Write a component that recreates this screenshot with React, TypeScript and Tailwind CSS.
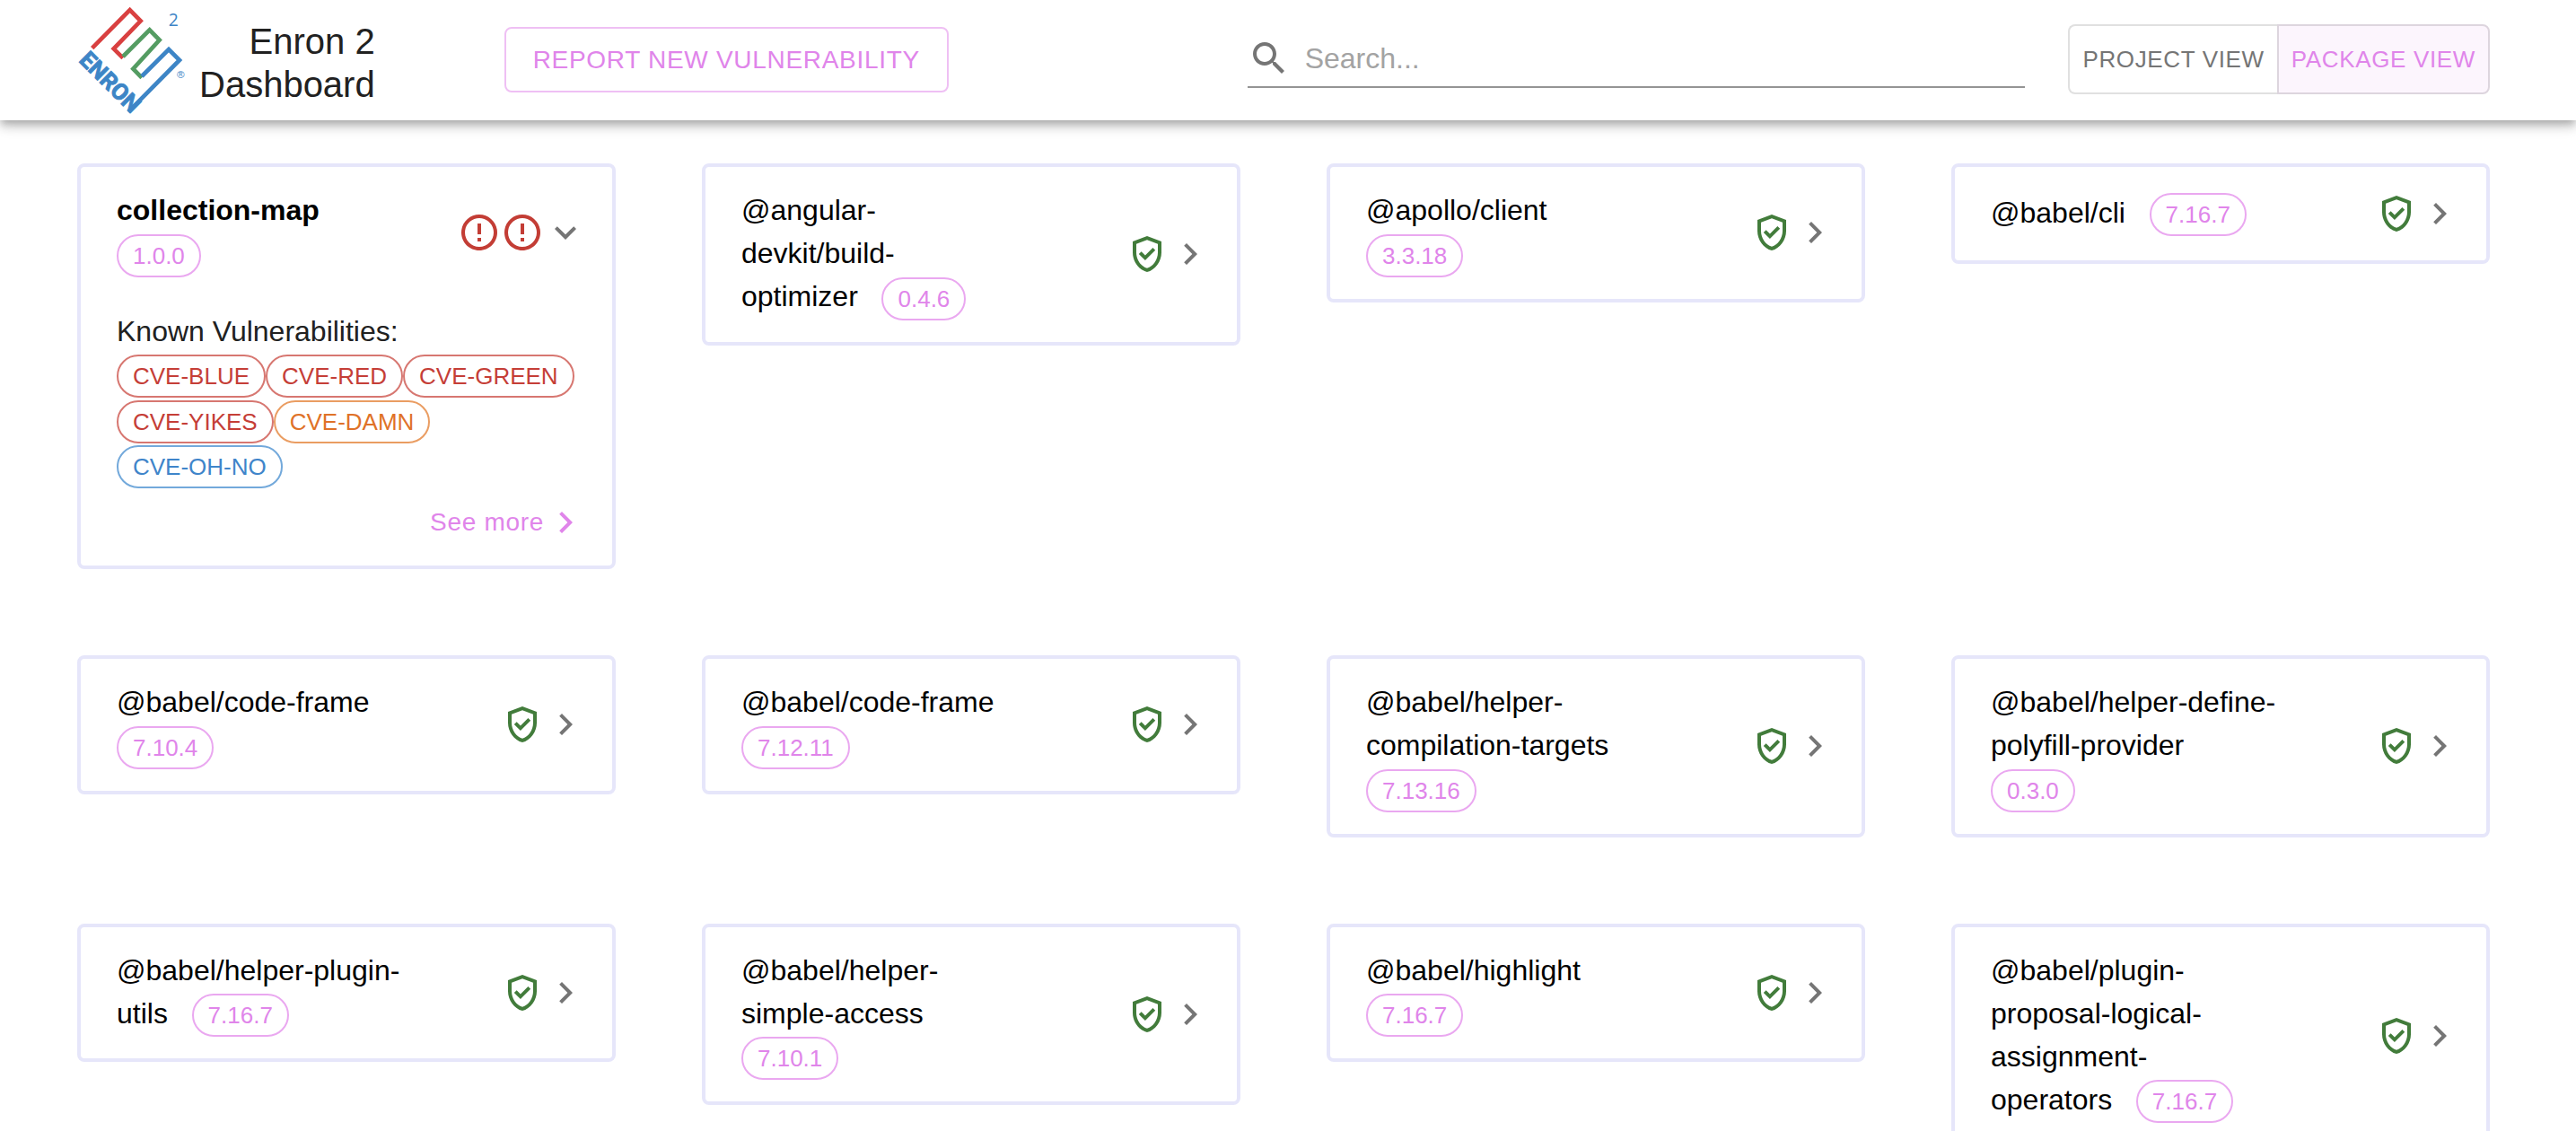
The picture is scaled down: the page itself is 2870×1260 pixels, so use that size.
import { useState } from "react";

type Severity = "high" | "medium" | "low";

interface Vulnerability {
  id: string;
  severity: Severity;
}

interface Package {
  name: string;
  version: string;
  vulnerabilities?: Vulnerability[];
}

const packages: Package[] = [
  {
    name: "collection-map",
    version: "1.0.0",
    vulnerabilities: [
      { id: "CVE-BLUE", severity: "high" },
      { id: "CVE-RED", severity: "high" },
      { id: "CVE-GREEN", severity: "high" },
      { id: "CVE-YIKES", severity: "high" },
      { id: "CVE-DAMN", severity: "medium" },
      { id: "CVE-OH-NO", severity: "low" },
    ],
  },
  { name: "@angular-devkit/build-optimizer", version: "0.4.6" },
  { name: "@apollo/client", version: "3.3.18" },
  { name: "@babel/cli", version: "7.16.7" },
  { name: "@babel/code-frame", version: "7.10.4" },
  { name: "@babel/code-frame", version: "7.12.11" },
  { name: "@babel/helper-compilation-targets", version: "7.13.16" },
  { name: "@babel/helper-define-polyfill-provider", version: "0.3.0" },
  { name: "@babel/helper-plugin-utils", version: "7.16.7" },
  { name: "@babel/helper-simple-access", version: "7.10.1" },
  { name: "@babel/highlight", version: "7.16.7" },
  { name: "@babel/plugin-proposal-logical-assignment-operators", version: "7.16.7" },
];

const chipColors: Record<Severity, string> = {
  high: "border-[#d77771] text-[#c53e37]",
  medium: "border-[#ea9d62] text-[#df7228]",
  low: "border-[#73a9db] text-[#3f85ca]",
};

function Icon({ d, className = "" }: { d: string; className?: string }) {
  return (
    <svg viewBox="0 0 24 24" fill="currentColor" aria-hidden="true" className={`size-12 shrink-0 ${className}`}>
      <path d={d} />
    </svg>
  );
}

const SEARCH =
  "M15.5 14h-.79l-.28-.27C15.41 12.59 16 11.11 16 9.5 16 5.91 13.09 3 9.5 3S3 5.91 3 9.5 5.91 16 9.5 16c1.61 0 3.09-.59 4.23-1.57l.27.28v.79l5 4.99L20.49 19l-4.99-5zm-6 0C7.01 14 5 11.99 5 9.5S7.01 5 9.5 5 14 7.01 14 9.5 11.99 14 9.5 14z";
const ERROR =
  "M11 15h2v2h-2zm0-8h2v6h-2zm.99-5C6.47 2 2 6.48 2 12s4.47 10 9.99 10C17.52 22 22 17.52 22 12S17.52 2 11.99 2zM12 20c-4.42 0-8-3.58-8-8s3.58-8 8-8 8 3.58 8 8-3.58 8-8 8z";
const SHIELD =
  "M12 2 4 5v6.09c0 5.05 3.41 9.76 8 10.91 4.59-1.15 8-5.86 8-10.91V5l-8-3zm6 9.09c0 4-2.55 7.7-6 8.83-3.45-1.13-6-4.82-6-8.83v-4.7l6-2.25 6 2.25v4.7zM8.82 10.59 7.4 12l3.54 3.54 5.66-5.66-1.41-1.41-4.24 4.24z";
const CHEVRON = "M10 6 8.59 7.41 13.17 12l-4.58 4.59L10 18l6-6z";

function Logo() {
  return (
    <svg
      viewBox="48 0 372 390"
      className="h-[130px] w-[124px] shrink-0 overflow-visible"
      role="img"
      aria-label="Enron 2"
    >
      <g fill="none" strokeWidth="14">
        <path d="M98 158 224 30 260 67 170 160 201 191" stroke="#d94040" />
        <path d="M201 186 290 97 323 131 235 227 264 257" stroke="#549c62" />
        <path d="M264 252 354 162 390 198 219 371" stroke="#3d85c6" />
      </g>
      <g fill="#3d85c6">
        <text
          transform="translate(51 201) rotate(45)"
          fontFamily="Roboto, 'Liberation Sans', sans-serif"
          fontWeight="700"
          fontSize="76"
          stroke="#3d85c6"
          strokeWidth="3"
        >
          ENRON
        </text>
        <text x="353" y="84" fontFamily="'Open Sans', sans-serif" fontSize="58">
          2
        </text>
        <text x="381" y="259" fontFamily="'Liberation Sans', sans-serif" fontSize="35">
          ®
        </text>
      </g>
    </svg>
  );
}

function Chip({ label, colors }: { label: string; colors: string }) {
  return (
    <span
      className={`inline-flex h-12 items-center rounded-full border-2 px-4 align-middle text-[26px] leading-none font-normal whitespace-nowrap ${colors}`}
    >
      {label}
    </span>
  );
}

function PackageCard({ name, version, vulnerabilities = [] }: Package) {
  const vulnerable = vulnerabilities.length > 0;
  const [open, setOpen] = useState(vulnerable);
  return (
    <article className="rounded-lg border-4 border-[#e6e6fa] bg-white pr-7 pl-10">
      <button
        type="button"
        aria-expanded={open}
        onClick={() => setOpen(!open)}
        className="flex w-full items-center justify-between py-6 text-left text-black"
      >
        <span className={vulnerable ? "block w-[61%] font-bold" : "block w-[61%]"}>
          {name}
          {"\u00a0\u00a0\u00a0"}
          <wbr />
          <Chip label={version} colors="border-[#eaa8f0] text-[#e085ea]" />
        </span>
        <span className="flex h-14 items-center">
          {vulnerable ? (
            <>
              <Icon d={ERROR} className="text-[#c33d35]" />
              <Icon d={ERROR} className="text-[#c33d35]" />
            </>
          ) : (
            <Icon d={SHIELD} className="text-[#427c3b]" />
          )}
          <Icon d={CHEVRON} className={open ? "rotate-90 text-[#757575]" : "text-[#757575]"} />
        </span>
      </button>
      {open && vulnerable && (
        <div className="pt-3 pb-6">
          <h3>Known Vulnerabilities:</h3>
          <div>
            {vulnerabilities.map((v) => (
              <Chip key={v.id} label={v.id} colors={chipColors[v.severity]} />
            ))}
          </div>
          <div className="mt-3.5 flex justify-end">
            <a href="#collection-map" className="flex items-center text-[28px] tracking-wide text-[#e085ea]">
              See more
              <Icon d={CHEVRON} />
            </a>
          </div>
        </div>
      )}
    </article>
  );
}

export default function App() {
  const [query, setQuery] = useState("");
  const shown = packages.filter((p) => p.name.includes(query));
  return (
    <div className="flex h-screen flex-col bg-white font-['Liberation_Sans',Arial,sans-serif] text-[32px] leading-[48px] text-[#212121]">
      <header className="z-10 flex h-[134px] shrink-0 items-center bg-white pr-24 pb-0.5 pl-[86px] shadow-[0_4px_8px_-2px_rgba(0,0,0,0.2),0_8px_10px_0_rgba(0,0,0,0.14),0_2px_20px_0_rgba(0,0,0,0.12)]">
        <div className="flex w-[48.5%] items-center">
          <Logo />
          <h1 className="ml-3 pt-2 text-right text-[40px]">
            Enron 2<br />
            Dashboard
          </h1>
          <button
            type="button"
            className="ml-36 rounded-lg border-2 border-[#efc0f4] px-[30px] py-2.5 text-[28px] leading-[49px] tracking-wide whitespace-nowrap text-[#e085ea] uppercase"
          >
            Report new vulnerability
          </button>
        </div>
        <label className="mr-12 flex h-16 flex-1 items-center gap-4 border-b-2 border-[#949494] text-[#757575]">
          <Icon d={SEARCH} />
          <input
            type="search"
            aria-label="Search"
            placeholder="Search..."
            value={query}
            onChange={(e) => setQuery(e.target.value)}
            className="w-full text-[#212121] outline-none placeholder:text-[#a3a3a3]"
          />
        </label>
        <div className="flex text-[26px] leading-[46px] tracking-wide whitespace-nowrap">
          <button
            type="button"
            className="rounded-l-lg border-2 border-r-0 border-[#e0e0e0] px-3.5 py-3.5 text-[#757575] uppercase"
          >
            Project view
          </button>
          <button
            type="button"
            aria-pressed="true"
            className="rounded-r-lg border-2 border-[#ddd5de] bg-[#fcf5fd] px-3.5 py-3.5 text-[#e085ea] uppercase"
          >
            Package view
          </button>
        </div>
      </header>
      <main className="grid flex-1 grid-cols-4 items-start gap-24 overflow-y-auto pt-12 pr-24 pb-12 pl-[86px] [scrollbar-width:none]">
        {shown.map((p) => (
          <PackageCard key={`${p.name}${p.version}`} {...p} />
        ))}
      </main>
    </div>
  );
}
